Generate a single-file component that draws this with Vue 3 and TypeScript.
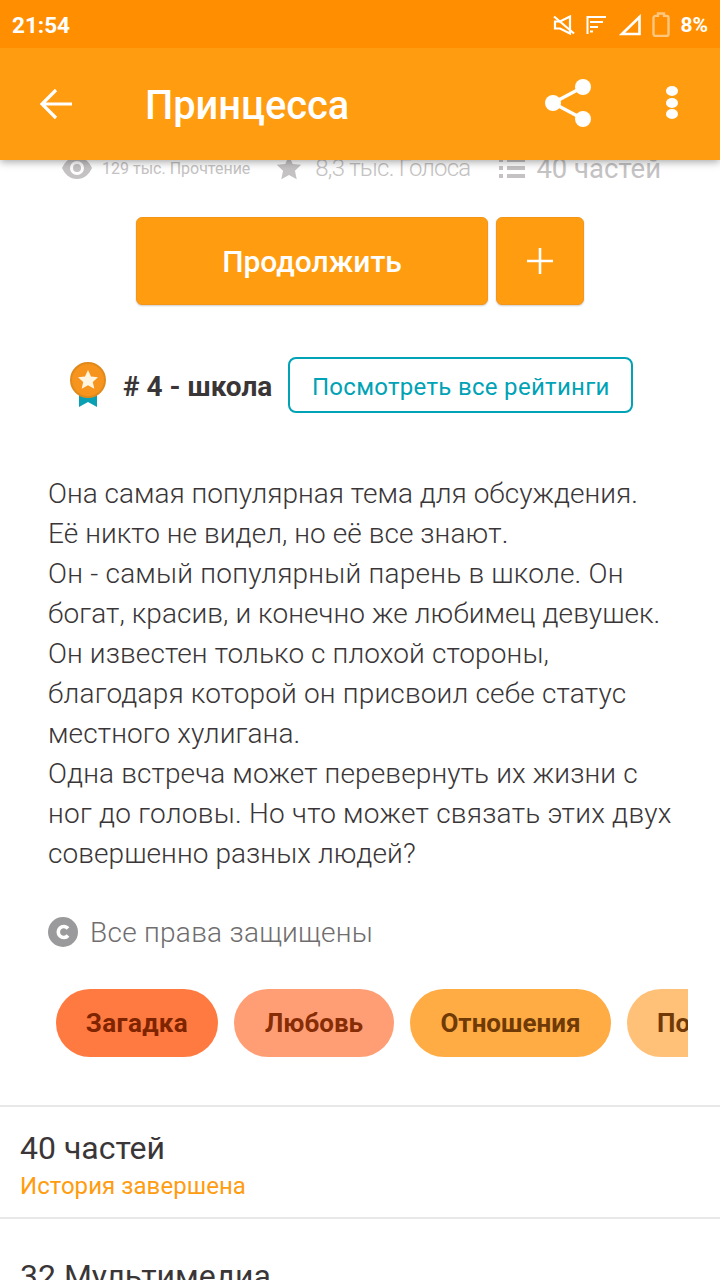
<script setup lang="ts">
const lines: { text: string; spacing: number }[] = [
  { text: 'Она самая популярная тема для обсуждения.', spacing: 0 },
  { text: 'Её никто не видел, но её все знают.', spacing: 0.06 },
  { text: 'Он - самый популярный парень в школе. Он', spacing: 0.22 },
  { text: 'богат, красив, и конечно же любимец девушек.', spacing: 0.07 },
  { text: 'Он известен только с плохой стороны,', spacing: 0.11 },
  { text: 'благодаря которой он присвоил себе статус', spacing: 0.17 },
  { text: 'местного хулигана.', spacing: 0.11 },
  { text: 'Одна встреча может перевернуть их жизни с', spacing: 0.12 },
  { text: 'ног до головы. Но что может связать этих двух', spacing: 0.24 },
  { text: 'совершенно разных людей?', spacing: 0.08 }
]
const tags = [
  { label: 'Загадка', cls: 'tag-a' },
  { label: 'Любовь', cls: 'tag-b' },
  { label: 'Отношения', cls: 'tag-c' },
  { label: 'Повседневность', cls: 'tag-d' }
]
</script>

<template>
  <div class="page">
    <header class="header">
      <div class="status">
        <span class="time">21:54</span>
        <div class="status-icons">
          <svg width="22" height="20" viewBox="0 0 22 20" fill="none" stroke="#fff" stroke-width="2.2">
            <path d="M2 6.500h5l10-5v17l-10-5H2z" />
            <path d="M1 1.500l20 17" />
          </svg>
          <svg class="ic-wifi" width="20" height="20" viewBox="0 0 20 20" fill="none" stroke="#fff" stroke-width="2">
            <path d="M1.500 19V2H20M4 7h13M4 12h8M4 16.500h3" />
          </svg>
          <svg class="ic-signal" width="22" height="22" viewBox="0 0 22 22" fill="none" stroke="#fff" stroke-width="2.6">
            <path d="M3 20h17.500V3z" />
          </svg>
          <svg class="ic-batt" width="18" height="25" viewBox="0 0 18 25" fill="none" stroke="#ffc680" stroke-width="2.400">
            <path d="M6 1.500h6v2.400h2.500a2 2 0 0 1 2 2V22a2 2 0 0 1-2 2h-11a2 2 0 0 1-2-2V5.900a2 2 0 0 1 2-2H6z" />
          </svg>
          <span class="pct">8%</span>
        </div>
      </div>
      <div class="appbar">
        <svg class="back" width="34" height="34" viewBox="0 0 34 34" fill="none" stroke="#fff" stroke-width="3.2">
          <path d="M33 17H3M17 3L3 17l14 14" />
        </svg>
        <h1 class="title">Принцесса</h1>
        <svg class="share" width="50" height="50" viewBox="0 0 50 50" fill="#fff">
          <circle cx="39" cy="9" r="8" />
          <circle cx="9" cy="25" r="8" />
          <circle cx="39" cy="41" r="8" />
          <path d="M39 9L9 25l30 16" fill="none" stroke="#fff" stroke-width="3.4" />
        </svg>
        <div class="dots"><i></i><i></i><i></i></div>
      </div>
    </header>

    <div class="stats">
      <div class="stat">
        <svg width="30" height="22" viewBox="0 0 30 22" fill="#c4c2c2">
          <path fill-rule="evenodd" d="M15 0C8 0 3 4.500 0 11c3 6.500 8 11 15 11s12-4.500 15-11C27 4.500 22 0 15 0zm0 18a7 7 0 1 1 0-14 7 7 0 0 1 0 14z" />
          <circle cx="15" cy="11" r="4" />
        </svg>
        <span class="s-sm">129 тыс. Прочтение</span>
      </div>
      <div class="stat">
        <svg width="28" height="28" viewBox="0 0 24 24" fill="#c4c2c2">
          <path d="M12 1.500l3.200 7 7.300.8-5.400 5 1.500 7.400L12 18l-6.600 3.700 1.500-7.400-5.400-5 7.300-.8z" />
        </svg>
        <span class="s-md">8,3 тыс. Голоса</span>
      </div>
      <div class="stat">
        <svg width="28" height="22" viewBox="0 0 28 22" fill="#c4c2c2">
          <path d="M0 1h4v4H0zM8 1h18v4H8zM0 9h4v4H0zM8 9h18v4H8zM0 17h4v4H0zM8 17h18v4H8z" />
        </svg>
        <span class="s-lg">40 частей</span>
      </div>
    </div>

    <div class="actions">
      <button class="btn btn-main">Продолжить</button>
      <button class="btn btn-add" aria-label="add">
        <svg width="26" height="26" viewBox="0 0 26 26" stroke="#fff" stroke-width="2.600" fill="none">
          <path d="M13 0v26M0 13h26" />
        </svg>
      </button>
    </div>

    <div class="rank">
      <svg class="medal" width="36" height="46" viewBox="0 0 36 46">
        <path d="M9 28h18v17l-9-5-9 5z" fill="#0aa0b4" />
        <circle cx="18" cy="18" r="17" fill="#f7941d" stroke="#e08a1c" stroke-width="2" />
        <path d="M18 8l3 6.400 7 .8-5.200 4.700 1.500 6.900-6.300-3.600-6.300 3.600 1.500-6.900L8 15.200l7-.8z" fill="#fff5e0" />
      </svg>
      <span class="rank-text"># 4 - школа</span>
      <button class="rank-btn">Посмотреть все рейтинги</button>
    </div>

    <div class="desc">
      <div v-for="l in lines" :key="l.text" :style="{ letterSpacing: l.spacing + 'px' }">{{ l.text }}</div>
    </div>

    <div class="copy">
      <svg width="30" height="30" viewBox="0 0 30 30">
        <circle cx="15" cy="15" r="15" fill="#9a9a9c" />
        <path d="M20 11.500a5.500 5.500 0 1 0 0 7" fill="none" stroke="#fff" stroke-width="3.600" />
      </svg>
      <span>Все права защищены</span>
    </div>

    <div class="tags">
      <span v-for="t in tags" :key="t.label" class="tag" :class="t.cls">{{ t.label }}</span>
    </div>

    <section class="row row-first">
      <div class="row-title">40 частей</div>
      <div class="row-sub">История завершена</div>
    </section>
    <section class="row row-second">
      <div class="row-title">32 Мультимедиа</div>
    </section>
  </div>
</template>

<style>
html, body { margin: 0; background: #fff; }
</style>

<style scoped>
.page {
  width: 720px;
  height: 1280px;
  overflow: hidden;
  background: #fff;
  font-family: Roboto, "Noto Sans", sans-serif;
  color: #3a3637;
}
.header {
  position: relative;
  z-index: 2;
  box-shadow: 0 2px 8px rgba(0, 0, 0, 0.35);
}
.status {
  height: 48px;
  background: #ff8f00;
  display: flex;
  align-items: center;
  justify-content: space-between;
  padding: 2px 12px 0;
  box-sizing: border-box;
  color: #fff;
}
.time { font-size: 22.500px; font-weight: 700; }
.status-icons { display: flex; align-items: center; }
.ic-wifi { margin-left: 11px; }
.ic-signal { margin-left: 13px; }
.ic-batt { margin-left: 11px; margin-top: -1px; }
.pct { font-size: 21px; font-weight: 700; margin-left: 10px; }
.appbar {
  height: 112px;
  background: #ff9c10;
  display: flex;
  align-items: center;
  color: #fff;
}
.back { margin-left: 39px; }
.title {
  margin: 2px 0 0 72px;
  font-size: 39.800px;
  font-weight: 500;
  flex: 1;
}
.share { margin-right: 72px; margin-top: -2px; }
.dots {
  display: flex;
  flex-direction: column;
  gap: 1.500px;
  margin-right: 42px;
  margin-top: -3px;
}
.dots i { width: 12px; height: 10px; border-radius: 50%; background: #fff; }
.stats {
  margin-top: -12px;
  height: 40px;
  display: flex;
  align-items: center;
  padding-left: 62px;
  color: #c4c2c2;
}
.stat { display: flex; align-items: center; }
.stat:nth-child(2) { margin-left: 25px; }
.stat:nth-child(3) { margin-left: 29px; }
.s-sm { font-size: 16px; margin-left: 10px; }
.s-md { font-size: 24px; font-weight: 300; margin-left: 12px; letter-spacing: -0.800px; }
.s-lg { font-size: 27.500px; margin-left: 9px; }
.actions {
  margin-top: 29px;
  padding-left: 136px;
  display: flex;
  gap: 8px;
}
.btn {
  height: 88px;
  border: 1px solid #f59618;
  border-radius: 6px;
  background: #ff9c10;
  color: #fff;
  font-family: inherit;
  box-shadow: 0 1px 2px rgba(0, 0, 0, 0.2);
  display: flex;
  align-items: center;
  justify-content: center;
  padding: 0;
}
.btn-main { width: 352px; font-size: 30px; font-weight: 500; }
.btn-add { width: 88px; }
.rank {
  margin-top: 52px;
  padding-left: 70px;
  display: flex;
  align-items: center;
  height: 56px;
}
.medal { margin-top: -1px; }
.rank-text {
  margin-left: 17px;
  font-size: 28px;
  font-weight: 700;
  color: #3a3637;
  padding-top: 2px;
}
.rank-btn {
  margin-left: 16px;
  width: 345px;
  height: 56px;
  border: 2px solid #00a2b5;
  border-radius: 8px;
  background: #fff;
  color: #00a2b5;
  font-family: inherit;
  font-size: 24px;
  font-weight: 400;
  letter-spacing: 0.300px;
  padding: 3px 0 0;
}
.desc {
  margin-top: 61px;
  padding-left: 48px;
  font-size: 28px;
  font-weight: 300;
  line-height: 40px;
  white-space: nowrap;
}
.copy {
  margin-top: 41px;
  padding-left: 48px;
  display: flex;
  align-items: center;
  gap: 12px;
  height: 34px;
  font-size: 28px;
  font-weight: 300;
  letter-spacing: 0.280px;
  color: #6f6d6e;
}
.tags {
  margin: 40px 32px 0 56px;
  display: flex;
  gap: 16px;
  overflow: hidden;
}
.tag {
  flex: none;
  height: 68px;
  padding: 0 30px;
  box-sizing: border-box;
  border-radius: 34px;
  display: flex;
  align-items: center;
  justify-content: center;
  font-size: 26px;
  font-weight: 700;
}
.tag-a { width: 162px; padding: 0; letter-spacing: 0.400px; background: #ff7a40; color: #7e2400; }
.tag-b { width: 160px; padding: 0; background: #ff9e75; color: #872d05; }
.tag-c { width: 201px; padding: 0; background: #ffac45; color: #6f3a05; }
.tag-d { background: #ffc078; color: #6f3a05; }
.row {
  border-top: 2px solid #e8e8e8;
  padding: 20px 20px 0;
  box-sizing: border-box;
}
.row-first { margin-top: 48px; height: 112px; }
.row-second { padding-top: 36px; height: 62px; overflow: visible; }
.row-title { font-size: 32px; line-height: 42px; color: #3a3637; }
.row-sub { font-size: 24px; line-height: 34px; color: #ff9c10; letter-spacing: 0.050px; }
</style>
